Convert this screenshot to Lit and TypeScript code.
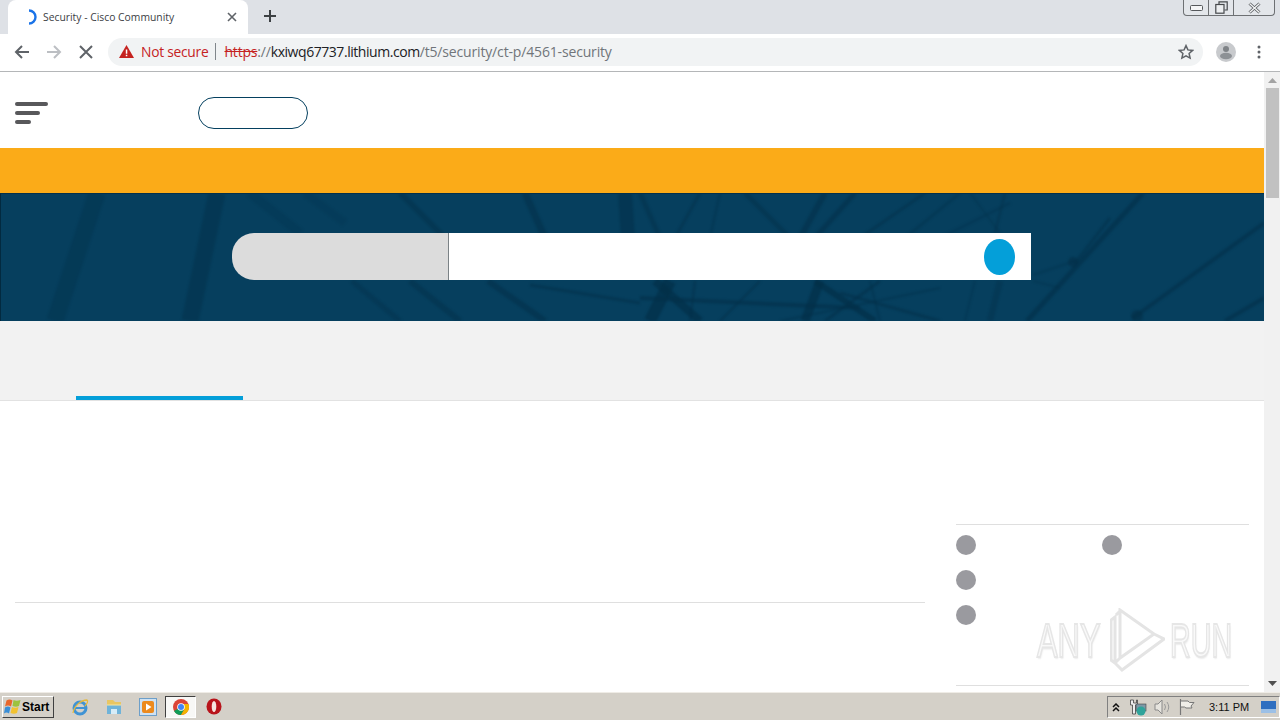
import { LitElement, html, css, svg } from "lit";
import { customElement } from "lit/decorators.js";

const lines: [number, number, number, number, number, number][] = [
  [97, 0, 55, 128, 17, 0.3], [217, 0, 190, 128, 17, 0.4], [250, 0, 300, 40, 9, 0.22], [305, 0, 345, 30, 8, 0.18],
  [400, 0, 445, 45, 6, 0.4], [525, 0, 545, 45, 7, 0.5], [625, 0, 628, 45, 14, 0.5], [640, 0, 660, 45, 5, 0.4],
  [700, 0, 675, 45, 3, 0.4], [720, 0, 710, 45, 2, 0.4], [745, 0, 790, 45, 5, 0.4], [825, 0, 800, 45, 6, 0.5],
  [855, 0, 815, 45, 5, 0.5], [925, 0, 860, 45, 3, 0.4], [960, 0, 905, 45, 3, 0.3],
  [352, 88, 400, 128, 5, 0.35], [410, 88, 460, 128, 6, 0.4], [488, 88, 545, 128, 6, 0.5], [530, 92, 640, 110, 3, 0.5],
  [650, 128, 670, 88, 12, 0.65], [655, 88, 700, 128, 8, 0.65], [690, 128, 695, 88, 2, 0.5], [720, 128, 760, 88, 2, 0.5],
  [640, 105, 860, 115, 4, 0.55], [805, 128, 820, 88, 9, 0.65], [815, 88, 875, 128, 6, 0.65], [840, 100, 940, 128, 3, 0.5],
  [825, 128, 880, 88, 3, 0.5], [780, 128, 940, 95, 2, 0.4], [870, 88, 880, 128, 2, 0.4],
  [1143, 0, 1027, 128, 5, 0.55], [1264, 30, 1133, 125, 4, 0.55], [1264, 105, 1225, 128, 4, 0.55],
  [970, 0, 1000, 40, 2, 0.3], [1005, 0, 995, 40, 3, 0.35], [940, 45, 1010, 10, 3, 0.3], [965, 128, 975, 88, 2, 0.35],
  [990, 128, 1000, 88, 6, 0.35], [1033, 82, 1075, 68, 2, 0.35], [1075, 70, 1110, 25, 3, 0.45], [1033, 88, 1060, 95, 2, 0.3],
];

@customElement("app-root")
export class AppRoot extends LitElement {
  static styles = css`
    :host { display: block; width: 1280px; height: 720px; overflow: hidden; position: relative; background: #fff; font-family: "Open Sans", "Liberation Sans", sans-serif; }
    svg { display: block; flex: none; }

    .strip { height: 34px; background: #dee1e6; display: flex; padding-left: 8px; position: relative; }
    .tab { width: 240px; height: 34px; background: #fff; border-radius: 8px 8px 0 0; display: flex; align-items: center; box-sizing: border-box; padding: 0 11px 0 18px; }
    .tab-title { font-size: 10.35px; color: #3c4043; margin-left: 6px; flex: 1; white-space: nowrap; }
    .new-tab { margin: 9px 0 0 15px; }
    .winctl { position: absolute; left: 1183px; top: 0; width: 92px; height: 16px; box-sizing: border-box; border: 1px solid #6d7073; border-top: 0; border-radius: 0 0 4px 4px; display: flex; background: #e3e6ea; }
    .winctl div { flex: none; display: flex; align-items: center; justify-content: center; border-right: 1px solid #6d7073; box-sizing: border-box; }
    .winctl div:nth-child(1) { width: 25px; }
    .winctl div:nth-child(2) { width: 25px; }
    .winctl div:nth-child(3) { flex: 1; border-right: 0; }

    .toolbar { height: 36px; padding-bottom: 1px; background: #fff; border-bottom: 1px solid #b4b6b8; display: flex; align-items: center; box-sizing: content-box; }
    .nav { display: flex; align-items: center; width: 108px; padding-left: 14px; box-sizing: border-box; gap: 16px; }
    .nav svg:last-child { margin-left: 1px; }
    .omni { width: 1095px; height: 28px; border-radius: 14px; background: #f1f3f4; display: flex; align-items: center; box-sizing: border-box; padding: 0 0 2px 11px; position: relative; white-space: nowrap; font-size: 14px; }
    .notsecure { color: #c5221f; margin-left: 7px; font-size: 13.8px; letter-spacing: -0.25px; }
    .sep { width: 1px; height: 17px; background: #80868b; margin: 0 8px 0 7px; }
    .scheme { color: #c5221f; text-decoration: line-through; letter-spacing: -0.2px; }
    .host { color: #202124; letter-spacing: -0.45px; }
    .path { color: #70757a; letter-spacing: -0.16px; }
    .star { position: absolute; left: 1070px; top: 6px; }
    .tool-right { display: flex; align-items: center; margin-left: 13px; gap: 21px; }

    .view { height: 620px; display: flex; }
    .page { width: 1264px; height: 620px; overflow: hidden; }
    .scroll { width: 16px; height: 620px; background: #f1f1f1; position: relative; display: flex; flex-direction: column; align-items: center; }
    .scroll .up { margin-top: 6px; }
    .thumb { width: 13px; height: 110px; background: #c1c1c1; margin-top: 5px; }
    .scroll .down { position: absolute; bottom: 6px; left: 4px; }

    .head { height: 76px; background: #fff; display: flex; align-items: center; padding: 6px 0 0 15px; box-sizing: border-box; }
    .burger { width: 33px; display: flex; flex-direction: column; gap: 5px; }
    .burger i { display: block; height: 4px; border-radius: 2px; background: #58585b; }
    .burger i:nth-child(1) { width: 33px; }
    .burger i:nth-child(2) { width: 25px; }
    .burger i:nth-child(3) { width: 16px; }
    .pill { width: 110px; height: 32px; box-sizing: border-box; border: 1px solid #04405f; border-radius: 16px; margin-left: 150px; }
    .orange { height: 45px; background: #fbab18; }

    .hero { height: 128px; background: #063f5e; border-left: 1px solid #022a40; border-top: 1px solid #03304a; position: relative; display: flex; align-items: flex-start; padding: 39px 0 0 231px; box-sizing: border-box; overflow: hidden; }
    .hero-art { position: absolute; left: -1px; top: -1px; filter: blur(0.8px); }
    .search { position: relative; width: 799px; height: 47px; display: flex; }
    .scope { width: 216px; background: #dcdcdc; border-radius: 22px 0 0 22px; border-right: 1px solid #7b8286; }
    .field { flex: 1; background: #fff; display: flex; align-items: center; justify-content: flex-end; padding-right: 16px; }
    .go { width: 31px; height: 36px; border-radius: 50%; background: #049fd9; }

    .tabs { height: 80px; background: #f2f2f2; border-bottom: 1px solid #e2e2e2; box-sizing: border-box; display: flex; align-items: flex-end; padding-left: 76px; }
    .tabs i { display: block; width: 167px; height: 4px; background: #049fd9; }

    .body { display: flex; background: #fff; padding-left: 15px; }
    .left { width: 910px; }
    .left hr, .right hr { border: 0; height: 1px; background: #dfdfdf; margin: 0; }
    .left hr { margin-top: 201px; }
    .right { width: 293px; margin-left: 31px; padding-top: 123px; }
    .dots { display: grid; grid-template-columns: 146px 146px; grid-auto-rows: 35px; padding-top: 10px; height: 150px; box-sizing: border-box; }
    .dots i { display: block; width: 20px; height: 20px; border-radius: 50%; background: #9a9a9f; }
    .dots .blank { background: none; }
    .right hr.end { margin-top: 10px; }

    .taskbar { height: 28px; background: #d4d0c8; border-top: 1px solid #efece6; box-sizing: border-box; display: flex; align-items: center; position: relative; }
    .start { margin-left: 2px; width: 52px; height: 22px; box-sizing: border-box; border: 1px solid; border-color: #fff #404040 #404040 #fff; display: flex; align-items: center; gap: 0; padding-left: 1px; font: 700 12px "Liberation Sans", sans-serif; color: #000; }
    .quick { display: flex; align-items: center; margin-left: 17px; gap: 16px; }
    .active { width: 31px; height: 22px; box-sizing: border-box; background: #f8f8f6; border: 1px solid; border-color: #404040 #fff #fff #404040; display: flex; align-items: center; justify-content: center; margin: 0 -6px 0 -8px; }
    .tray { position: absolute; left: 1107px; top: 3px; width: 173px; height: 22px; box-sizing: border-box; border: 1px solid; border-color: #808080 #fff #fff #808080; display: flex; align-items: center; padding-left: 4px; }
    .tray svg { margin-right: 7px; }
    .clock { font: 11px "Liberation Sans", sans-serif; color: #111; margin-left: 7px; width: 52px; }

    .mark { position: absolute; left: 1037px; top: 608px; width: 200px; height: 64px; display: flex; align-items: center; pointer-events: none; }
    .mark span { font: 400 49px "Liberation Sans", sans-serif; color: #f9f9f9; -webkit-text-stroke: 2px #e6e6e6; text-shadow: 1px 2px 2px rgba(0, 0, 0, 0.08); line-height: 1; transform-origin: left center; display: block; }
    .mark .any { width: 73px; transform: scaleX(0.63); }
    .mark .run { width: 62px; margin-left: 5px; transform: scaleX(0.585); }
    .mark svg { filter: blur(0.4px); }
  `;

  private art() {
    return svg`<svg class="hero-art" width="1264" height="128" viewBox="0 0 1264 128">
      ${lines.map(([a, b, c, d, w, o]) => svg`<line x1=${a} y1=${b} x2=${c} y2=${d} stroke="#032f48" stroke-width=${w} opacity=${o}/>`)}
      <circle cx="1073" cy="69" r="5" fill="#032f48" opacity=".6"/>
      <circle cx="1137" cy="123" r="6" fill="#032f48" opacity=".6"/>
    </svg>`;
  }

  render() {
    return html`
      <div class="strip">
        <div class="tab">
          <svg width="11" height="16" viewBox="0 0 11 16"><path d="M3 1.500a6.500 6.500 0 0 1 0 13" fill="none" stroke="#1a73e8" stroke-width="2.400"/></svg>
          <span class="tab-title">Security - Cisco Community</span>
          <svg width="10" height="10" viewBox="0 0 10 10"><path d="M1 1l8 8M9 1l-8 8" stroke="#5f6368" stroke-width="1.600"/></svg>
        </div>
        <svg class="new-tab" width="14" height="14" viewBox="0 0 14 14"><path d="M7 1v12M1 7h12" stroke="#3c4043" stroke-width="2"/></svg>
        <div class="winctl">
          <div><svg width="13" height="6" viewBox="0 0 13 6"><rect x=".5" y=".5" width="12" height="5" rx="1" fill="#f4f5f6" stroke="#55585b"/></svg></div>
          <div><svg width="13" height="13" viewBox="0 0 13 13"><path d="M4 3V.8h8.200V9H9.500" fill="none" stroke="#45484b" stroke-width="1.200"/><rect x=".8" y="3.500" width="8.200" height="8.700" fill="#eceef0" stroke="#45484b" stroke-width="1.200"/></svg></div>
          <div><svg width="13" height="12" viewBox="0 0 13 12"><path d="M1.500 1.500l10 9M11.500 1.500l-10 9" stroke="#55585b" stroke-width="3"/><path d="M1.500 1.500l10 9M11.500 1.500l-10 9" stroke="#f2f3f4" stroke-width="1.400"/></svg></div>
        </div>
      </div>
      <div class="toolbar">
        <div class="nav">
          <svg width="16" height="16" viewBox="0 0 16 16"><path d="M15 8H2M8 2L2 8l6 6" fill="none" stroke="#5f6368" stroke-width="2"/></svg>
          <svg width="16" height="16" viewBox="0 0 16 16"><path d="M1 8h13M8 2l6 6-6 6" fill="none" stroke="#bcbfc3" stroke-width="2"/></svg>
          <svg width="14" height="14" viewBox="0 0 14 14"><path d="M1 1l12 12M13 1L1 13" stroke="#5f6368" stroke-width="2"/></svg>
        </div>
        <div class="omni">
          <svg width="15" height="13" viewBox="0 0 15 13"><path d="M7.500 0L15 13H0z" fill="#c5221f"/><path d="M6.800 4.500h1.500v4.300H6.800zM6.800 9.800h1.500v1.500H6.800z" fill="#fff"/></svg>
          <span class="notsecure">Not secure</span><span class="sep"></span><span class="scheme">https</span><span class="path">://</span><span class="host">kxiwq67737.lithium.com</span><span class="path">/t5/security/ct-p/4561-security</span>
          <svg class="star" width="16" height="16" viewBox="0 0 16 16"><path d="M8 1.600l1.900 4.300 4.700.5-3.500 3.100 1 4.600L8 11.800l-4.100 2.300 1-4.600L1.400 6.400l4.700-.5z" fill="none" stroke="#5f6368" stroke-width="1.500"/></svg>
        </div>
        <div class="tool-right">
          <svg width="20" height="20" viewBox="0 0 20 20"><circle cx="10" cy="10" r="10" fill="#c8cacd"/><circle cx="10" cy="7" r="3" fill="#7f8387"/><ellipse cx="10" cy="14" rx="6" ry="3.200" fill="#8d9195"/></svg>
          <svg width="4" height="14" viewBox="0 0 4 14"><circle cx="2" cy="2" r="1.500" fill="#5f6368"/><circle cx="2" cy="7" r="1.500" fill="#5f6368"/><circle cx="2" cy="12" r="1.500" fill="#5f6368"/></svg>
        </div>
      </div>
      <div class="view">
        <div class="page">
          <div class="head">
            <div class="burger"><i></i><i></i><i></i></div>
            <div class="pill"></div>
          </div>
          <div class="orange"></div>
          <div class="hero">
            ${this.art()}
            <div class="search">
              <div class="scope"></div>
              <div class="field"><div class="go"></div></div>
            </div>
          </div>
          <div class="tabs"><i></i></div>
          <div class="body">
            <div class="left"><hr /></div>
            <div class="right">
              <hr />
              <div class="dots">
                <i></i><i></i>
                <i></i><i class="blank"></i>
                <i></i><i class="blank"></i>
              </div>
              <hr class="end" />
            </div>
          </div>
        </div>
        <div class="scroll">
          <svg class="up" width="9" height="5" viewBox="0 0 9 5"><path d="M4.500 0L9 5H0z" fill="#a3a3a3"/></svg>
          <div class="thumb"></div>
          <svg class="down" width="9" height="5" viewBox="0 0 9 5"><path d="M0 0h9L4.500 5z" fill="#505050"/></svg>
        </div>
      </div>
      <div class="taskbar">
        <div class="start">
          <svg width="18" height="17" viewBox="0 0 18 17"><path d="M2.500 2.500q3-2 6 0l-1.500 6q-3-2-6 0z" fill="#e8662b"/><path d="M9.500 2q3 1.500 7 0l-1.500 6q-3 1.500-6.500 0z" fill="#9cc23e"/><path d="M1 9.500q3-2 5.500 0l-1.500 6q-2.500-2-5 0z" fill="#3a8ed6"/><path d="M8 9q3 1.500 6.500 0l-1.500 6q-3 1.500-6.500 0z" fill="#f2c230"/></svg>
          Start
        </div>
        <div class="quick">
          <svg width="18" height="18" viewBox="0 0 18 18"><circle cx="9" cy="10" r="6" fill="none" stroke="#3f93d4" stroke-width="3"/><path d="M4 10h10" stroke="#3f93d4" stroke-width="2"/><path d="M2 15C3 8 10 2 16 2c1.500 1 0 4-2 6" fill="none" stroke="#e6b93c" stroke-width="1.300"/></svg>
          <svg width="18" height="18" viewBox="0 0 18 18"><path d="M2 2h6l2 2h6v12H2z" fill="#e9c663"/><path d="M2 7h14v9H2z" fill="#6fb3d9"/><path d="M6 16v-5h6v5z" fill="#d7ecf7"/><path d="M2 7h14" stroke="#f5e7a8"/></svg>
          <svg width="18" height="18" viewBox="0 0 18 18"><rect x=".5" y=".5" width="17" height="17" fill="#cfe2f3" stroke="#6d9fc9"/><rect x="3" y="3" width="12" height="12" rx="2" fill="#ec8a1d"/><path d="M7 5.500L12.500 9 7 12.500z" fill="#fff"/></svg>
          <div class="active">
            <svg width="16" height="16" viewBox="0 0 16 16"><circle cx="8" cy="8" r="8" fill="#db4437"/><path d="M8 8L1 12a8 8 0 0 0 7 4l3.500-6z" fill="#0f9d58"/><path d="M8 8l3.500 2L8 16a8 8 0 0 0 7.500-11H8z" fill="#f4b400"/><circle cx="8" cy="8" r="3.800" fill="#fff"/><circle cx="8" cy="8" r="3" fill="#4285f4"/></svg>
          </div>
          <svg width="16" height="17" viewBox="0 0 16 17"><ellipse cx="8" cy="8.500" rx="7.500" ry="8" fill="#b8141b"/><ellipse cx="8" cy="8.500" rx="2.300" ry="5.500" fill="#f6e6e0"/></svg>
        </div>
        <div class="tray">
          <svg width="8" height="9" viewBox="0 0 8 9"><path d="M1 4l3-3 3 3M1 8l3-3 3 3" fill="none" stroke="#111" stroke-width="1.500"/></svg>
          <svg style="margin-left:2px" width="18" height="17" viewBox="0 0 18 17"><path d="M1.500 1h3v3h3V1h1v5h-2v9h-3V6h-2z" fill="#eee" stroke="#444" stroke-width=".8"/><rect x="7" y="5" width="10" height="7" fill="#7d98a6" stroke="#444" stroke-width=".6"/><circle cx="12" cy="12" r="4.500" fill="#2fa39a"/></svg>
          <svg width="18" height="16" viewBox="0 0 18 16"><path d="M1 5h3l4-4v14l-4-4H1z" fill="#e6e4de" stroke="#8a8a8a"/><path d="M10.500 5q2 3 0 6M13 3q3.500 5 0 10" fill="none" stroke="#9a9a9a"/></svg>
          <svg width="16" height="16" viewBox="0 0 16 16"><path d="M1.500 0v16" stroke="#777" stroke-width="1.200"/><path d="M2 2h7l1.500 1.500H15L12 7l1 2H7L5.500 8H2" fill="#f0eee8" stroke="#777"/></svg>
          <span class="clock">3:11 PM</span>
          <svg style="margin:0" width="15" height="12" viewBox="0 0 15 12"><rect width="15" height="9" fill="#2f6fc0"/><rect y="8" width="15" height="4" fill="#9cc0e6"/></svg>
        </div>
      </div>
      <div class="mark">
        <span class="any">ANY</span>
        <svg width="55" height="64" viewBox="0 0 55 64"><path d="M1 12v40l4 3V9zM10 2v48l34-24zM6 7l5-5M10 50l-5 5M44 26l10 5-42 31-7-7" fill="none" stroke="#e4e4e4" stroke-width="3"/></svg>
        <span class="run">RUN</span>
      </div>
    `;
  }
}
